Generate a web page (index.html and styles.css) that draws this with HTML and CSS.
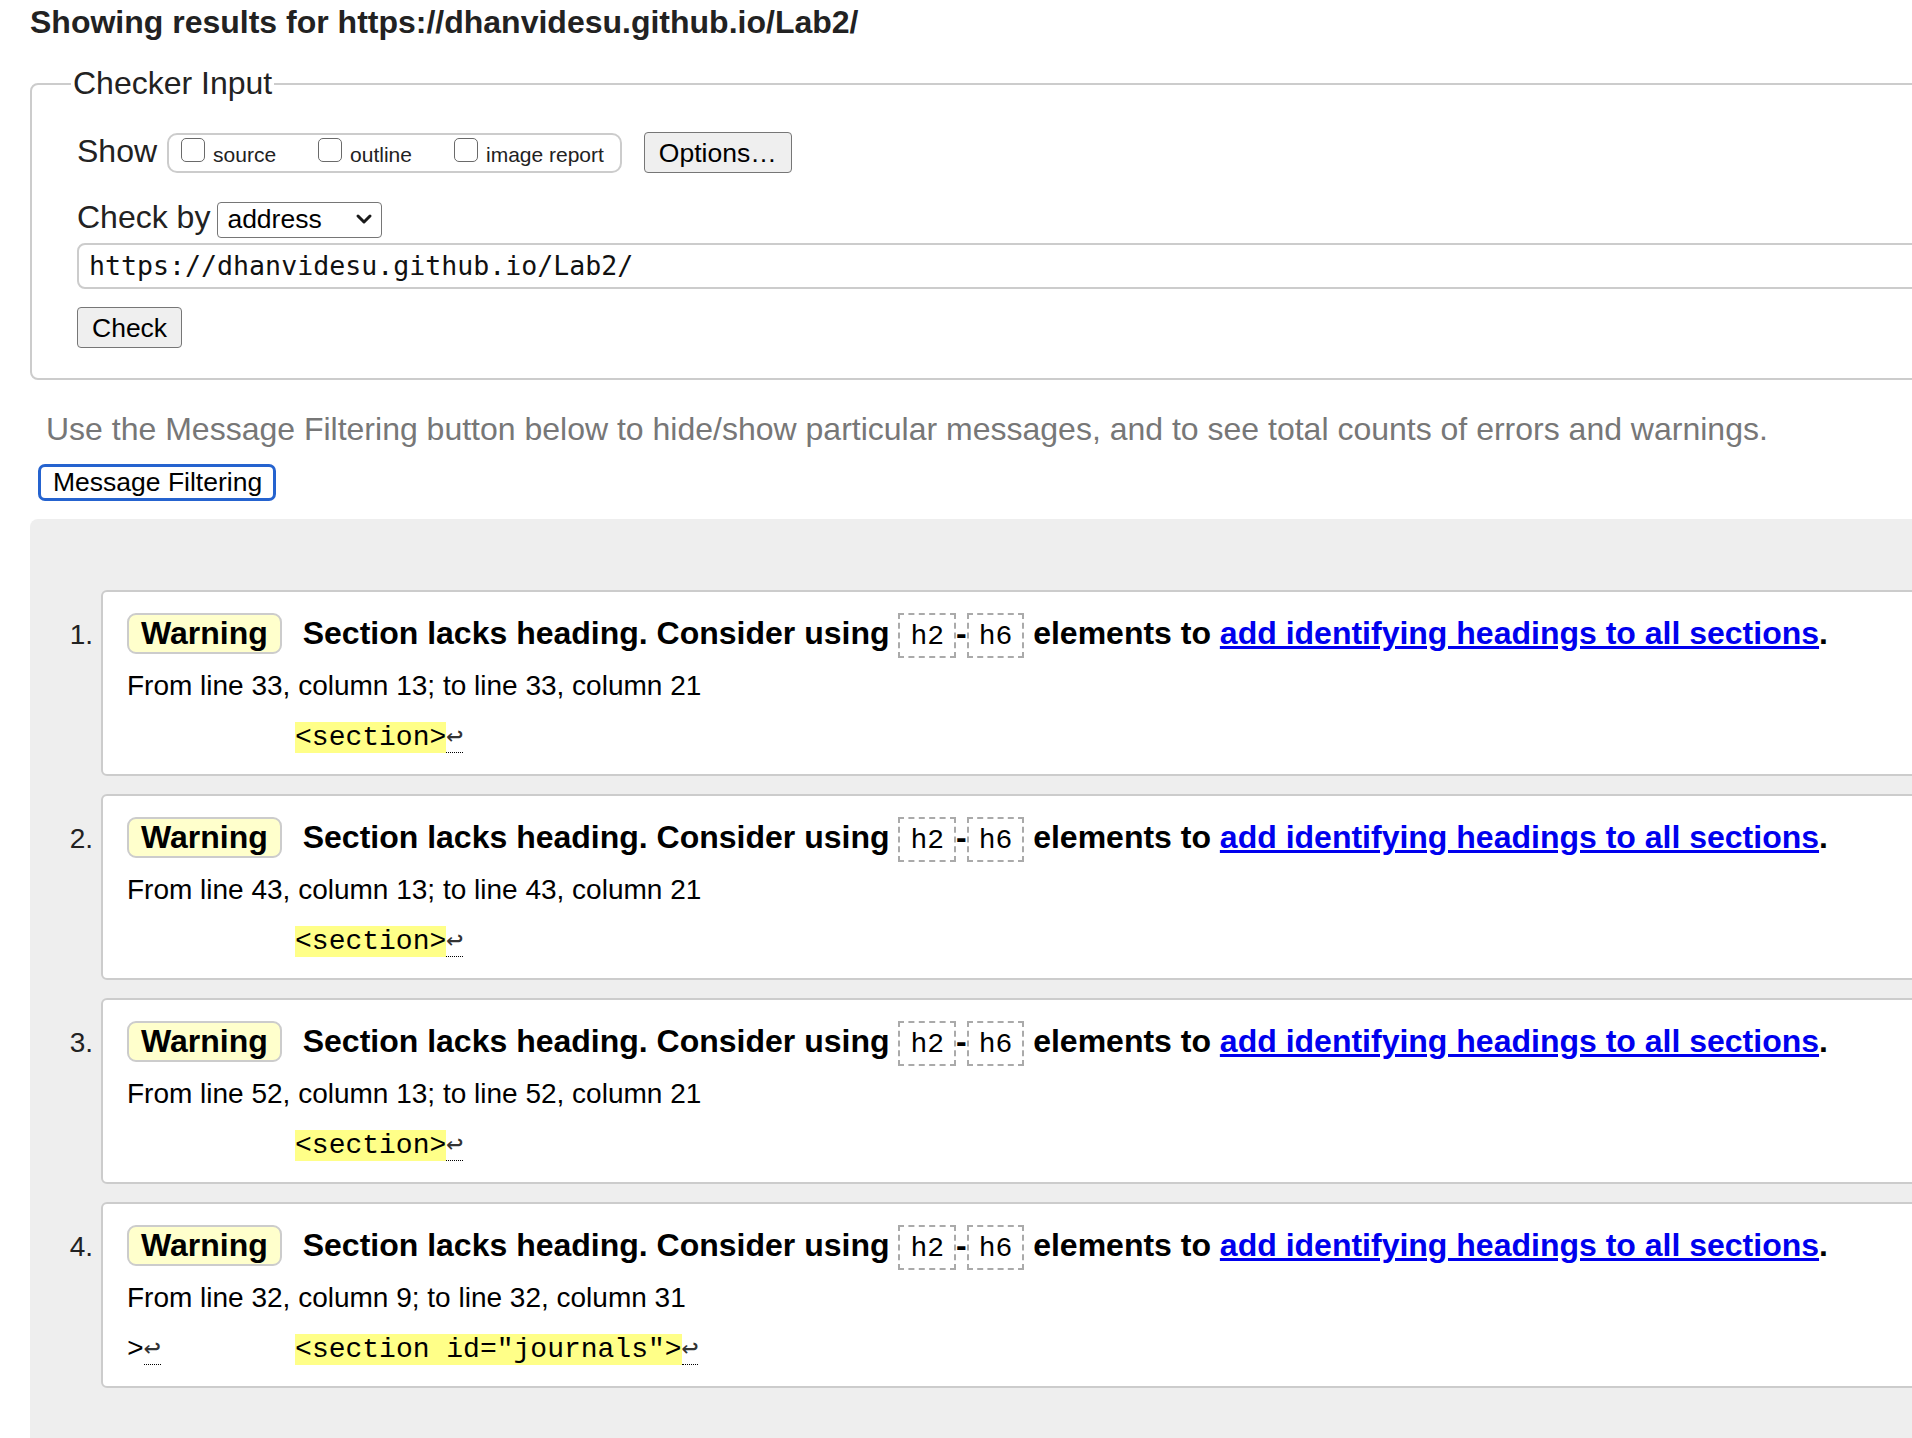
FILE: index.html
```html
<!DOCTYPE html>
<html lang="en">
<head>
<meta charset="utf-8">
<title>Nu Html Checker</title>
<link rel="stylesheet" href="styles.css">
</head>
<body>
<div class="page">
  <h2 class="results-title">Showing results for https://dhanvidesu.github.io/Lab2/</h2>
  <form class="checker">
    <fieldset class="checker-input">
      <legend>Checker Input</legend>
      <div class="row row-show">
        <span class="row-label">Show</span>
        <span class="show-group"><label class="opt"><input type="checkbox" class="cb">source</label><label class="opt"><input type="checkbox" class="cb">outline</label><label class="opt"><input type="checkbox" class="cb">image report</label></span>
        <button type="button" class="btn btn-options">Options…</button>
      </div>
      <div class="row row-checkby">
        <label class="row-label label-checkby">Check by</label>
        <span class="select-wrap">
          <select class="select"><option>address</option></select>
          <svg class="chevron" width="18" height="12" viewBox="0 0 18 12" aria-hidden="true"><path d="M3 3 L9 9 L15 3" fill="none" stroke="#1a1a1a" stroke-width="3" stroke-linecap="round" stroke-linejoin="round"/></svg>
        </span>
      </div>
      <div class="row row-url">
        <input class="url" type="text" value="https://dhanvidesu.github.io/Lab2/">
      </div>
      <div class="row row-submit">
        <button type="button" class="btn btn-check">Check</button>
      </div>
    </fieldset>
  </form>
  <p class="hint">Use the Message Filtering button below to hide/show particular messages, and to see total counts of errors and warnings.</p>
  <button type="button" class="btn-filter">Message Filtering</button>
  <div class="results">
    <ol class="messages">
      <li class="message">
        <div class="message-box">
          <p class="message-text"><span class="badge">Warning</span> <span>Section lacks heading. Consider using <code class="tag">h2</code>-<code class="tag">h6</code> elements to <a href="#">add identifying headings to all sections</a>.</span></p>
          <p class="location">From line 33, column 13; to line 33, column 21</p>
          <p class="extract"><code>          <span class="hl">&lt;section&gt;</span><span class="lf" title="Line break">↩</span></code></p>
        </div>
      </li>
      <li class="message">
        <div class="message-box">
          <p class="message-text"><span class="badge">Warning</span> <span>Section lacks heading. Consider using <code class="tag">h2</code>-<code class="tag">h6</code> elements to <a href="#">add identifying headings to all sections</a>.</span></p>
          <p class="location">From line 43, column 13; to line 43, column 21</p>
          <p class="extract"><code>          <span class="hl">&lt;section&gt;</span><span class="lf" title="Line break">↩</span></code></p>
        </div>
      </li>
      <li class="message">
        <div class="message-box">
          <p class="message-text"><span class="badge">Warning</span> <span>Section lacks heading. Consider using <code class="tag">h2</code>-<code class="tag">h6</code> elements to <a href="#">add identifying headings to all sections</a>.</span></p>
          <p class="location">From line 52, column 13; to line 52, column 21</p>
          <p class="extract"><code>          <span class="hl">&lt;section&gt;</span><span class="lf" title="Line break">↩</span></code></p>
        </div>
      </li>
      <li class="message">
        <div class="message-box">
          <p class="message-text"><span class="badge">Warning</span> <span>Section lacks heading. Consider using <code class="tag">h2</code>-<code class="tag">h6</code> elements to <a href="#">add identifying headings to all sections</a>.</span></p>
          <p class="location">From line 32, column 9; to line 32, column 31</p>
          <p class="extract"><code>&gt;<span class="lf" title="Line break">↩</span>        <span class="hl">&lt;section id="journals"&gt;</span><span class="lf" title="Line break">↩</span></code></p>
        </div>
      </li>
    </ol>
  </div>
</div>
</body>
</html>
```
FILE: styles.css
```css
html {
  overflow: hidden;
  background: #fff;
}

body {
  margin: 0;
  font-family: "Liberation Sans", Arial, Helvetica, sans-serif;
  color: #222;
}

.page {
  width: 2300px;
  padding: 0 0 0 30px;
}

.results-title {
  margin: 0;
  padding-top: 2px;
  font-size: 32px;
  line-height: 40px;
  font-weight: 700;
  color: #222;
}

.checker {
  margin: 23px 0 0;
}

.checker-input {
  margin: 0;
  padding: 30px 0 30px 45px;
  border: 2px solid #ccc;
  border-radius: 8px;
  min-width: 0;
}

.checker-input legend {
  font-size: 32px;
  line-height: normal;
  color: #222;
  padding: 0 2px;
  margin-left: -6px;
}

.row {
  display: flex;
  align-items: baseline;
}

.row-label {
  font-size: 32px;
  line-height: normal;
  color: #222;
}

.show-group {
  display: inline-block;
  margin-left: 10px;
  padding: 3px 16px 0 12px;
  border: 2px solid #ccc;
  border-radius: 10px;
  font-size: 21px;
  line-height: 32px;
  color: #222;
  white-space: nowrap;
}

.opt + .opt {
  margin-left: 42px;
}

.cb {
  -webkit-appearance: none;
  appearance: none;
  display: inline-block;
  width: 24px;
  height: 24px;
  margin: 0 8px 0 0;
  padding: 0;
  box-sizing: border-box;
  border: 1.5px solid #6a6a6a;
  border-radius: 5px;
  background: #fff;
  vertical-align: baseline;
}

.btn {
  font-family: "Liberation Sans", Arial, Helvetica, sans-serif;
  font-size: 26.5px;
  color: #000;
  background: #efefef;
  border: 1px solid #767676;
  border-radius: 4px;
  padding: 2px 14px 0;
  line-height: 37px;
}

.btn-options {
  margin-left: 22px;
}

.row-checkby {
  margin-top: 26px;
}

.label-checkby {
  margin-right: 7px;
}

.select-wrap {
  position: relative;
  display: inline-block;
}

.select {
  -webkit-appearance: none;
  appearance: none;
  width: 165px;
  height: 36px;
  box-sizing: border-box;
  font-family: "Liberation Sans", Arial, Helvetica, sans-serif;
  font-size: 26.5px;
  color: #000;
  background: #fff;
  border: 1px solid #767676;
  border-radius: 4px;
  padding: 0 0 1px 9px;
  margin: 0;
}

.chevron {
  position: absolute;
  left: 138px;
  top: 11px;
  pointer-events: none;
}

.row-url {
  margin-top: 5px;
}

.url {
  width: 100%;
  height: 46px;
  box-sizing: border-box;
  padding: 0 10px;
  border: 2px solid #ccc;
  border-radius: 8px;
  font-family: "DejaVu Sans Mono", monospace;
  font-size: 26.6px;
  color: #111;
  background: #fff;
  margin: 0;
}

.row-submit {
  margin-top: 18px;
}

.hint {
  margin: 29px 0 0 16px;
  font-size: 32px;
  line-height: 40px;
  color: #777;
}

.btn-filter {
  display: block;
  margin: 15px 0 0 8px;
  font-family: "Liberation Sans", Arial, Helvetica, sans-serif;
  font-size: 26.5px;
  line-height: 31px;
  color: #000;
  background: #fff;
  border: 3px solid #2563cf;
  border-radius: 7px;
  padding: 0 11px 0 12px;
}

.results {
  margin-top: 18px;
  background: #eee;
  border-radius: 8px 0 0 0;
  padding: 71px 0 80px;
}

.messages {
  list-style: none;
  margin: 0;
  padding: 0;
  counter-reset: msg;
}

.message {
  display: flex;
  align-items: baseline;
  counter-increment: msg;
  margin-bottom: 18px;
}

.message::before {
  content: counter(msg) ".";
  flex: 0 0 71px;
  box-sizing: border-box;
  padding-right: 8px;
  text-align: right;
  font-size: 28px;
  color: #222;
}

.message-box {
  flex: 1;
  background: #fff;
  border: 2px solid #ccc;
  border-radius: 6px;
  padding: 21px 24px 20px;
}

.message-text {
  margin: 0;
  font-size: 32px;
  line-height: 41px;
  font-weight: 700;
  color: #000;
  white-space: nowrap;
}

.badge {
  display: inline-block;
  background: #ffc;
  border: 2px solid #ccc;
  border-radius: 9px;
  padding: 0 12px;
  line-height: 37px;
  margin-right: 12px;
}

.tag {
  font-family: "Liberation Mono", "Courier New", monospace;
  font-weight: 400;
  font-size: 28px;
  line-height: 1;
  border: 2px dashed #aaa;
  padding: 6px 10px 4px;
}

.message-text a {
  color: #0000ee;
  text-decoration: underline;
}

.location {
  margin: 16px 0 0;
  font-size: 28px;
  line-height: 32px;
  color: #000;
}

.extract {
  margin: 20px 0 0;
  font-family: "Liberation Mono", "Courier New", monospace;
  font-size: 28px;
  line-height: 32px;
  color: #000;
}

.extract code {
  font-family: "Liberation Mono", "Courier New", monospace;
  font-size: 28px;
  white-space: pre;
}

.hl {
  background: #ffff88;
}

.lf {
  font-family: "DejaVu Sans Mono", monospace;
  font-size: 28px;
  line-height: 0;
  color: #333;
  border-bottom: 1px dotted #000;
}
```
